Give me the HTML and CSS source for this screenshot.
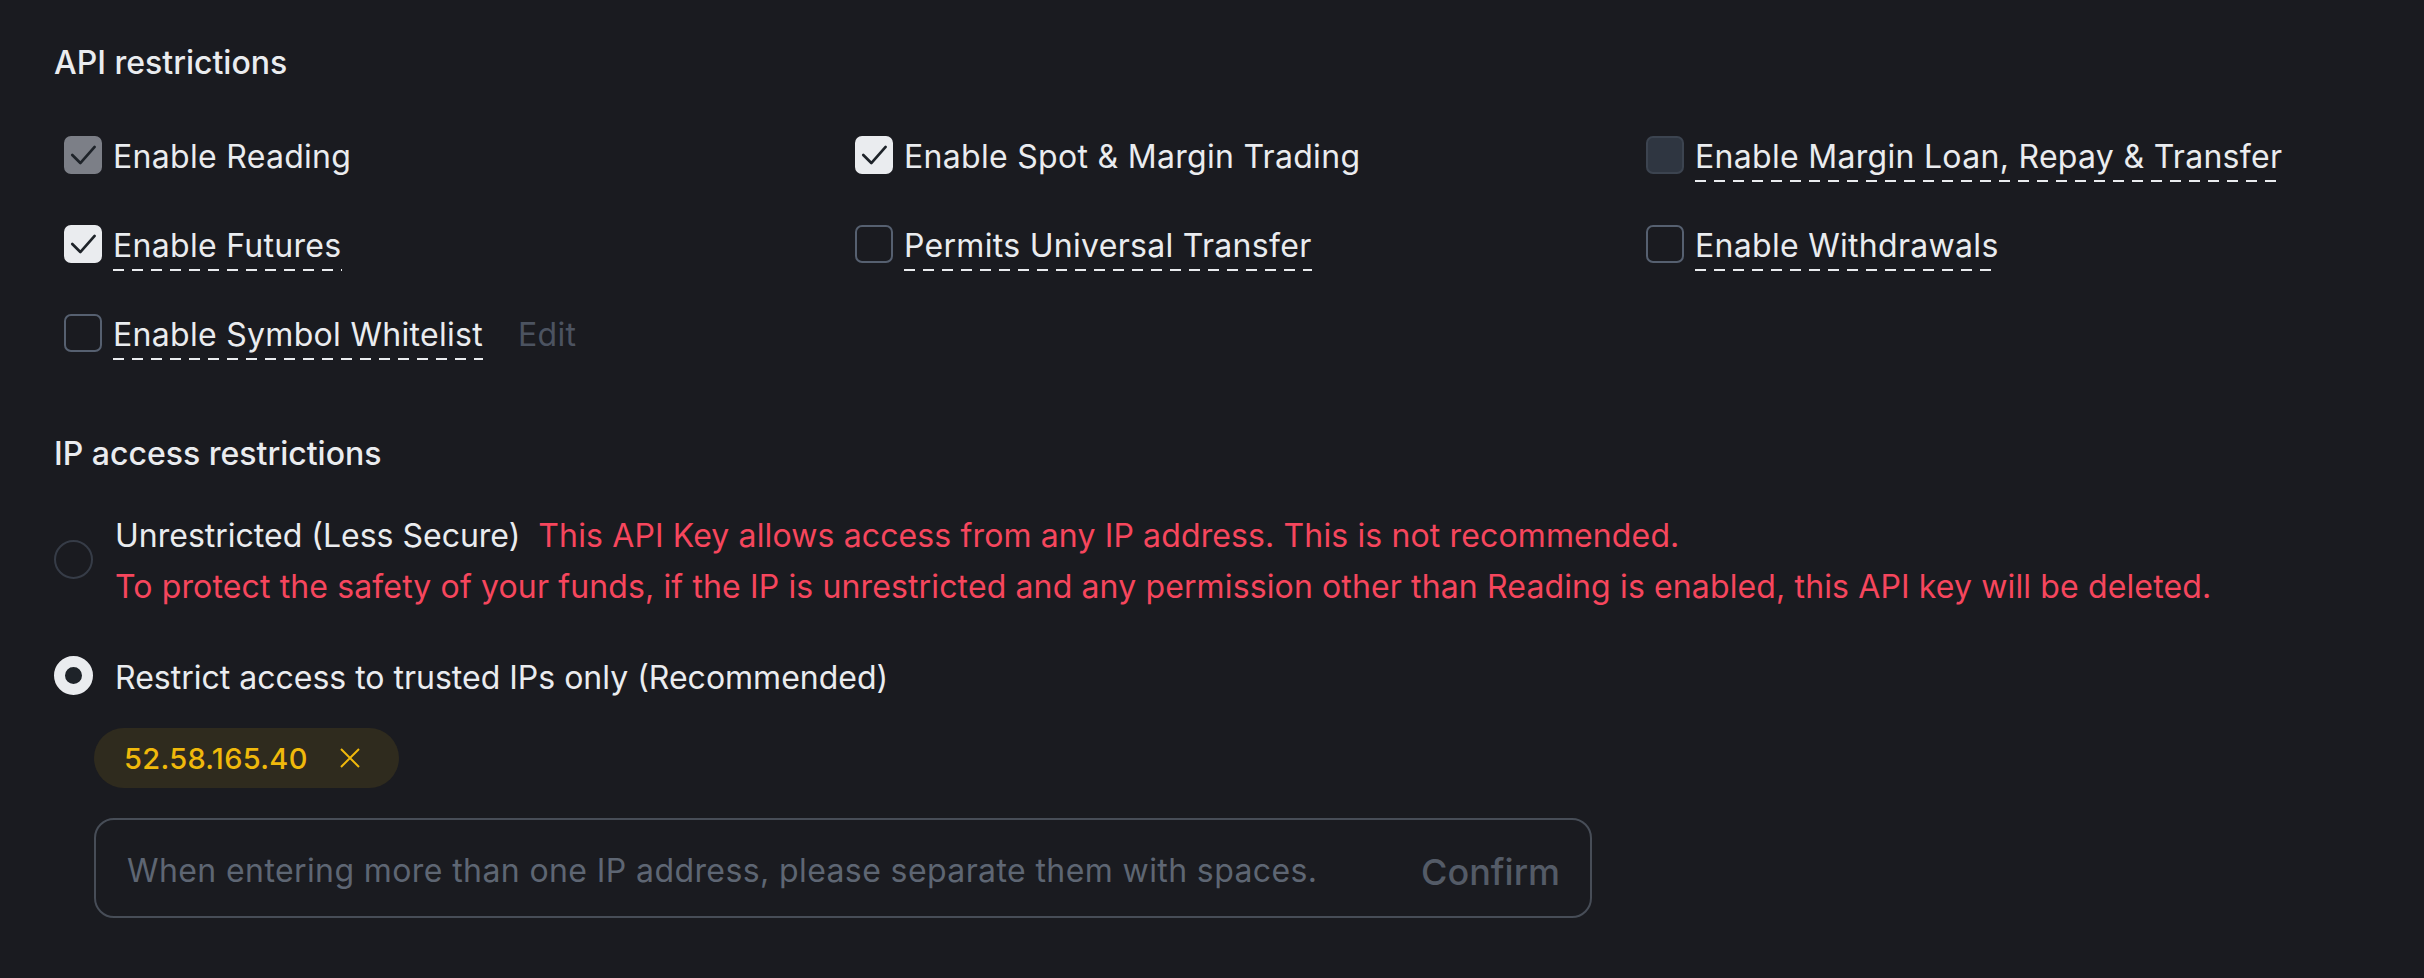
FILE: index.html
```html
<!DOCTYPE html>
<html lang="en">
<head>
<meta charset="utf-8">
<title>API restrictions</title>
<link rel="stylesheet" href="styles.css">
</head>
<body>
<div class="page">
  <h2 class="section-title">API restrictions</h2>
  <div class="perm-grid">
    <div class="perm">
      <span class="cb cb-locked"><svg viewBox="0 0 38 38"><polyline points="7,19 16,28 32,10"/></svg></span>
      <span class="perm-label">Enable Reading</span>
    </div>
    <div class="perm">
      <span class="cb cb-checked"><svg viewBox="0 0 38 38"><polyline points="7,19 16,28 32,10"/></svg></span>
      <span class="perm-label">Enable Spot &amp; Margin Trading</span>
    </div>
    <div class="perm">
      <span class="cb cb-disabled"></span>
      <span class="perm-label dashed">Enable Margin Loan, Repay &amp; Transfer</span>
    </div>
    <div class="perm">
      <span class="cb cb-checked"><svg viewBox="0 0 38 38"><polyline points="7,19 16,28 32,10"/></svg></span>
      <span class="perm-label dashed">Enable Futures</span>
    </div>
    <div class="perm">
      <span class="cb"></span>
      <span class="perm-label dashed">Permits Universal Transfer</span>
    </div>
    <div class="perm">
      <span class="cb"></span>
      <span class="perm-label dashed">Enable Withdrawals</span>
    </div>
    <div class="perm">
      <span class="cb"></span>
      <span class="perm-label dashed">Enable Symbol Whitelist</span>
      <span class="edit">Edit</span>
    </div>
  </div>

  <h2 class="section-title ip-title">IP access restrictions</h2>

  <div class="radio-option radio-first">
    <span class="radio"></span>
    <div class="radio-text">
      <div class="radio-line"><span class="radio-label">Unrestricted (Less Secure)</span><span class="warn">This API Key allows access from any IP address. This is not recommended.</span></div>
      <div class="warn">To protect the safety of your funds, if the IP is unrestricted and any permission other than Reading is enabled, this API key will be deleted.</div>
    </div>
  </div>

  <div class="radio-option">
    <span class="radio radio-checked"></span>
    <div class="radio-text">
      <span class="radio-label">Restrict access to trusted IPs only (Recommended)</span>
    </div>
  </div>

  <div class="ip-block">
    <div class="chips">
      <span class="chip">52.58.165.40<svg class="chip-x" viewBox="0 0 22 22"><path d="M2 2 L20 20 M20 2 L2 20"/></svg></span>
    </div>
    <div class="ip-input">
      <span class="placeholder">When entering more than one IP address, please separate them with spaces.</span>
      <span class="confirm">Confirm</span>
    </div>
  </div>
</div>
</body>
</html>
```

FILE: styles.css
```css
html, body {
  margin: 0;
  padding: 0;
  background: #1a1b20;
}

body {
  font-family: Inter, "Liberation Sans", sans-serif;
  color: #eaecef;
}

.page {
  padding: 44px 54px 40px;
}

.section-title {
  margin: 0;
  font-size: 32px;
  line-height: 38px;
  font-weight: 500;
  color: #eaecef;
}

.perm-grid {
  margin-top: 54px;
  padding-left: 10px;
  display: grid;
  grid-template-columns: repeat(3, 791px);
  row-gap: 43px;
}

.perm {
  display: flex;
  align-items: flex-start;
}

.cb {
  flex: none;
  width: 38px;
  height: 38px;
  box-sizing: border-box;
  border: 2px solid #566070;
  border-radius: 7px;
  display: flex;
  align-items: center;
  justify-content: center;
}

.cb svg {
  width: 38px;
  height: 38px;
}

.cb svg polyline {
  fill: none;
  stroke: #1e2329;
  stroke-width: 3;
  stroke-linecap: round;
  stroke-linejoin: round;
}

.cb-checked {
  background: #eaecef;
  border-color: #eaecef;
}

.cb-locked {
  background: #7c7f87;
  border-color: #7c7f87;
}

.cb-disabled {
  background: #2f3641;
  border-color: #3c4450;
}

.perm-label {
  margin-left: 11px;
  margin-top: 2px;
  font-size: 32px;
  line-height: 38px;
  letter-spacing: 0.3px;
  padding-bottom: 6px;
  white-space: nowrap;
}

.perm-label.dashed {
  background-image: linear-gradient(to right, #eaecef 0 11px, transparent 11px 19px);
  background-size: 19px 2px;
  background-repeat: repeat-x;
  background-position: 0 100%;
}

.edit {
  margin-left: 35px;
  margin-top: 2px;
  font-size: 32px;
  line-height: 38px;
  letter-spacing: 0.3px;
  color: #4c5360;
}

.ip-title {
  margin-top: 75px;
}

.radio-option {
  margin-top: 40px;
  display: flex;
  align-items: center;
}

.radio-option.radio-first {
  margin-top: 37px;
}

.radio {
  flex: none;
  width: 39px;
  height: 39px;
  box-sizing: border-box;
  border: 2px solid #363c47;
  border-radius: 50%;
  margin-right: 22px;
  margin-bottom: 4px;
}

.radio-checked {
  border: 11px solid #eaecef;
  background: #1e2329;
}

.radio-text {
  font-size: 32px;
  line-height: 51px;
}

.radio-line {
  white-space: nowrap;
}

.radio-label {
  color: #eaecef;
}

.warn {
  color: #f6465d;
  white-space: nowrap;
  letter-spacing: 0.13px;
}

.radio-line .warn {
  margin-left: 18px;
}

.ip-block {
  margin-left: 40px;
  margin-top: 25px;
}

.chips {
  display: flex;
}

.chip {
  display: inline-flex;
  align-items: center;
  height: 60px;
  padding: 0 38px 0 30px;
  border-radius: 30px;
  background: #2f2b1e;
  color: #f0b90b;
  font-size: 29px;
  font-weight: 500;
  letter-spacing: 0.3px;
}

.chip-x {
  width: 22px;
  height: 22px;
  margin-left: 31px;
}

.chip-x path {
  stroke: #f0b90b;
  stroke-width: 2;
  fill: none;
}

.ip-input {
  margin-top: 30px;
  width: 1498px;
  height: 100px;
  box-sizing: border-box;
  border: 2px solid #474d57;
  border-radius: 20px;
  padding: 4px 30px 0 31px;
  display: flex;
  align-items: center;
  justify-content: space-between;
}

.placeholder {
  font-size: 32px;
  letter-spacing: 0.4px;
  color: #5e6673;
}

.confirm {
  font-size: 36px;
  font-weight: 500;
  color: #545b67;
  padding-top: 3px;
}
```
